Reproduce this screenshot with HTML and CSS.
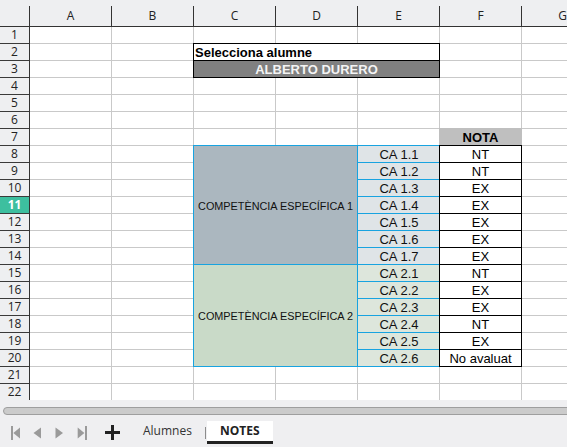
FILE: index.html
```html
<!DOCTYPE html>
<html lang="ca">
<head>
<meta charset="utf-8">
<title>NOTES</title>
<link rel="stylesheet" href="styles.css">
</head>
<body>
<div class="app">
  <div class="sheet">
    <div class="colhead">
      <div class="corner"></div>
      <div class="ch">A</div>
      <div class="ch">B</div>
      <div class="ch">C</div>
      <div class="ch">D</div>
      <div class="ch">E</div>
      <div class="ch">F</div>
      <div class="ch">G</div>
      <div class="ch">H</div>
    </div>
    <div class="body">
      <div class="rowhead">
        <div class="rh">1</div><div class="rh">2</div><div class="rh">3</div><div class="rh">4</div>
        <div class="rh">5</div><div class="rh">6</div><div class="rh">7</div><div class="rh">8</div>
        <div class="rh">9</div><div class="rh">10</div><div class="rh sel">11</div><div class="rh">12</div>
        <div class="rh">13</div><div class="rh">14</div><div class="rh">15</div><div class="rh">16</div>
        <div class="rh">17</div><div class="rh">18</div><div class="rh">19</div><div class="rh">20</div>
        <div class="rh">21</div><div class="rh">22</div>
      </div>
      <div class="cells">
        <div class="c sel-label">Selecciona alumne</div>
        <div class="c student">ALBERTO DURERO</div>
        <div class="c nota-head">NOTA</div>

        <div class="c comp comp1">COMPETÈNCIA ESPECÍFICA 1</div>
        <div class="c ca ca1 r8">CA 1.1</div>
        <div class="c ca ca1 r9">CA 1.2</div>
        <div class="c ca ca1 r10">CA 1.3</div>
        <div class="c ca ca1 r11">CA 1.4</div>
        <div class="c ca ca1 r12">CA 1.5</div>
        <div class="c ca ca1 r13">CA 1.6</div>
        <div class="c ca ca1 r14">CA 1.7</div>

        <div class="c comp comp2">COMPETÈNCIA ESPECÍFICA 2</div>
        <div class="c ca ca2 r15">CA 2.1</div>
        <div class="c ca ca2 r16">CA 2.2</div>
        <div class="c ca ca2 r17">CA 2.3</div>
        <div class="c ca ca2 r18">CA 2.4</div>
        <div class="c ca ca2 r19">CA 2.5</div>
        <div class="c ca ca2 r20">CA 2.6</div>

        <div class="c grade r8">NT</div>
        <div class="c grade r9">NT</div>
        <div class="c grade r10">EX</div>
        <div class="c grade r11">EX</div>
        <div class="c grade r12">EX</div>
        <div class="c grade r13">EX</div>
        <div class="c grade r14">EX</div>
        <div class="c grade r15">NT</div>
        <div class="c grade r16">EX</div>
        <div class="c grade r17">EX</div>
        <div class="c grade r18">NT</div>
        <div class="c grade r19">EX</div>
        <div class="c grade r20">No avaluat</div>
      </div>
    </div>
  </div>
  <div class="footer">
    <div class="hscroll"></div>
    <div class="tabbar">
      <button class="nav" aria-label="Primer full">
        <svg width="14" height="14" viewBox="0 0 14 14"><rect x="2" y="0" width="2" height="14"/><polygon points="4.3,7 11,1.5 11,12.5"/></svg>
      </button>
      <button class="nav" aria-label="Full anterior">
        <svg width="14" height="14" viewBox="0 0 14 14"><polygon points="2.5,7 10,1.5 10,12.5"/></svg>
      </button>
      <button class="nav" aria-label="Full següent">
        <svg width="14" height="14" viewBox="0 0 14 14"><polygon points="2.5,1.5 10,7 2.5,12.5"/></svg>
      </button>
      <button class="nav" aria-label="Últim full">
        <svg width="14" height="14" viewBox="0 0 14 14"><polygon points="2.7,1.5 9.4,7 2.7,12.5"/><rect x="10" y="0" width="2" height="14"/></svg>
      </button>
      <button class="nav add" aria-label="Afegeix full">
        <svg width="15" height="15" viewBox="0 0 15 15"><rect x="0" y="6" width="15" height="3"/><rect x="6" y="0" width="3" height="15"/></svg>
      </button>
      <div class="tab">Alumnes</div>
      <div class="sep"></div>
      <div class="tab active">NOTES</div>
    </div>
  </div>
</div>
</body>
</html>
```
FILE: styles.css
```css
html, body {
  margin: 0;
  padding: 0;
}
body {
  font-family: "Liberation Sans", Arial, sans-serif;
  background: #efeff1;
}
.app {
  width: 567px;
  height: 447px;
  overflow: hidden;
  display: flex;
  flex-direction: column;
}
.sheet {
  height: 400px;
  flex: none;
  overflow: hidden;
  background: #fff;
  display: flex;
  flex-direction: column;
}
.colhead {
  display: flex;
  align-items: flex-end;
  height: 27px;
  flex: none;
  box-sizing: border-box;
  border-bottom: 1px solid #333;
  background: #eeeff1;
}
.corner {
  width: 30px;
  height: 20px;
  flex: none;
  box-sizing: border-box;
  border-right: 1px solid #333;
}
.ch {
  width: 82px;
  height: 20px;
  flex: none;
  box-sizing: border-box;
  border-right: 1px solid #333;
  text-align: center;
  font-family: "Open Sans", "Noto Sans", sans-serif;
  font-size: 12px;
  line-height: 20px;
  color: #222;
}
.body {
  display: flex;
  flex: 1;
  min-height: 0;
}
.rowhead {
  width: 30px;
  flex: none;
  box-sizing: border-box;
  border-right: 1px solid #333;
  background: #eeeff1;
}
.rh {
  height: 17px;
  box-sizing: border-box;
  border-bottom: 1px solid #3a3a3a;
  text-align: center;
  font-family: "Open Sans", "Noto Sans", sans-serif;
  font-size: 12px;
  line-height: 16px;
  color: #222;
}
.rh.sel {
  background: #3dbf9f;
  color: #fff;
  font-weight: bold;
}
.cells {
  flex: 1;
  display: grid;
  grid-template-columns: repeat(7, 82px);
  grid-template-rows: repeat(22, 17px);
  background-color: #fff;
  background-image:
    linear-gradient(to right, transparent 81px, #c9c9c9 81px),
    linear-gradient(to bottom, transparent 16px, #c9c9c9 16px);
  background-size: 82px 100%, 100% 17px;
}
.c {
  margin: -1px 0 0 -1px;
  box-sizing: border-box;
  display: flex;
  align-items: center;
  justify-content: center;
  font-size: 13px;
  line-height: 16px;
  color: #000;
  white-space: nowrap;
  padding-top: 1px;
}
.sel-label {
  grid-column: 3 / 6;
  grid-row: 2;
  border: 1px solid #000;
  justify-content: flex-start;
  padding-left: 1px;
  font-weight: bold;
  background: #fff;
}
.student {
  grid-column: 3 / 6;
  grid-row: 3;
  border: 1px solid #000;
  background: #808080;
  color: #f4f4f4;
  font-weight: bold;
}
.nota-head {
  grid-column: 6;
  grid-row: 7;
  background: #bfbfbf;
  font-weight: bold;
}
.comp {
  grid-column: 3 / 5;
  border: 1px solid #18a3e0;
  font-size: 10.85px;
  color: #111;
}
.comp1 {
  grid-row: 8 / 15;
  background: #abb7bf;
}
.comp2 {
  grid-row: 15 / 21;
  background: #c9dac8;
}
.ca {
  grid-column: 5;
  border: 1px solid #18a3e0;
  border-right: none;
  color: #111;
}
.ca1 { background: #dfe4e7; }
.ca2 { background: #dde6dc; }
.grade {
  grid-column: 6;
  border: 1px solid #000;
  background: #fff;
}
.r8 { grid-row: 8; }
.r9 { grid-row: 9; }
.r10 { grid-row: 10; }
.r11 { grid-row: 11; }
.r12 { grid-row: 12; }
.r13 { grid-row: 13; }
.r14 { grid-row: 14; }
.r15 { grid-row: 15; }
.r16 { grid-row: 16; }
.r17 { grid-row: 17; }
.r18 { grid-row: 18; }
.r19 { grid-row: 19; }
.r20 { grid-row: 20; }

.footer {
  flex: 1;
  overflow: hidden;
  background: #efeff1;
}
.hscroll {
  margin: 7px -10px 0 3px;
  height: 8px;
  box-sizing: border-box;
  border: 1px solid #9e9e9e;
  border-radius: 4px;
  background: #cbcbcb;
}
.tabbar {
  display: flex;
  height: 23px;
  margin-top: 6px;
  padding-left: 5px;
}
.nav {
  width: 22px;
  flex: none;
  padding: 0;
  border: none;
  background: none;
  display: flex;
  align-items: center;
  justify-content: center;
  fill: #9a9a9a;
}
.nav svg { display: block; }
.nav.add {
  margin-left: 8px;
  fill: #222;
}
.tab {
  flex: none;
  padding: 0 12px;
  box-sizing: border-box;
  height: 23px;
  border-bottom: 3px solid transparent;
  font-family: "Open Sans", "Noto Sans", sans-serif;
  font-size: 12px;
  line-height: 20px;
  color: #333;
}
.tabbar .tab:first-of-type {
  margin-left: 8px;
}
.sep {
  width: 1px;
  height: 12px;
  margin: 6px 1px 0 1px;
  background: #8c8c8c;
  flex: none;
}
.tab.active {
  background: #fff;
  border-bottom-color: #222;
  font-weight: bold;
  color: #222;
  padding: 0 13px;
}
```
